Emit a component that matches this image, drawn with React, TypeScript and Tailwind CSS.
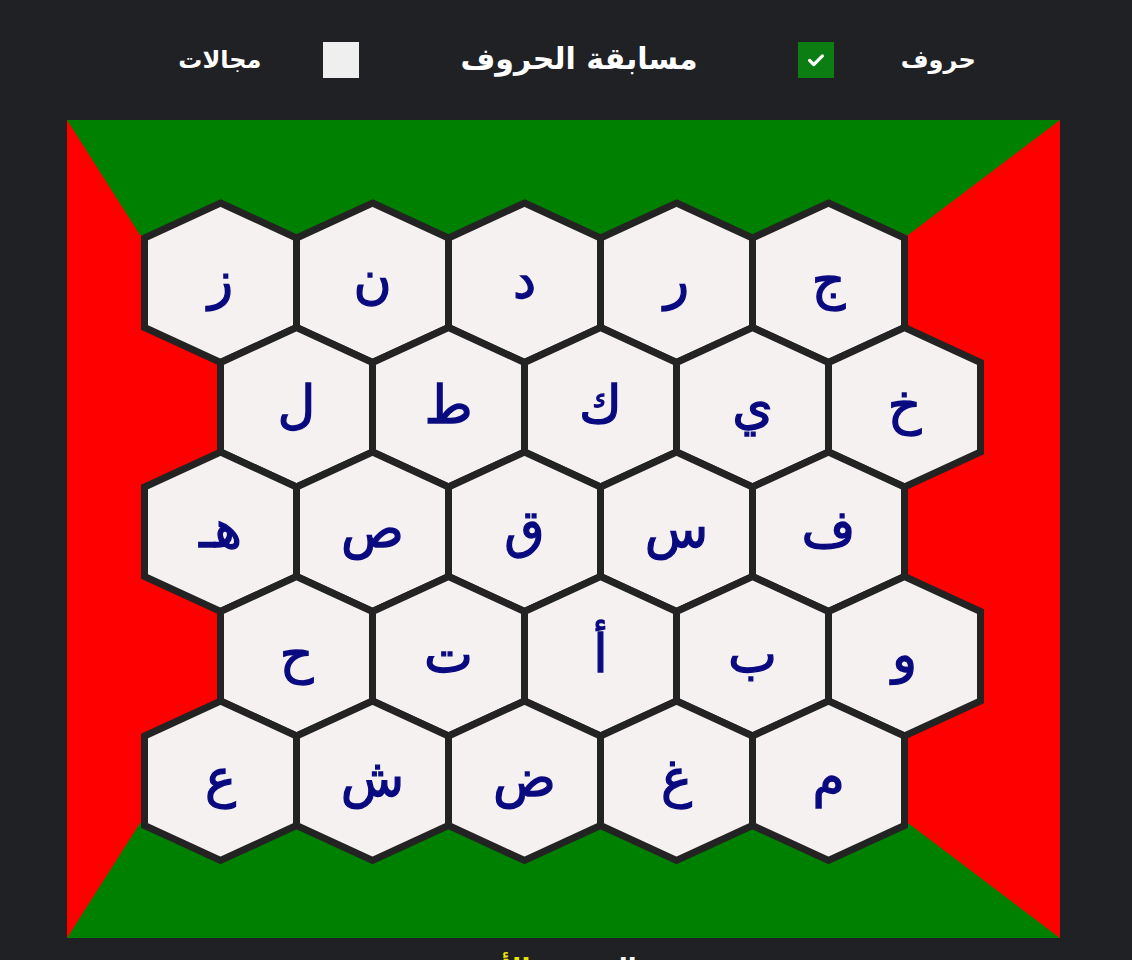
const rows: string[][] = [
  ['ز', 'ن', 'د', 'ر', 'ج'],
  ['ل', 'ط', 'ك', 'ي', 'خ'],
  ['هـ', 'ص', 'ق', 'س', 'ف'],
  ['ح', 'ت', 'أ', 'ب', 'و'],
  ['ع', 'ش', 'ض', 'غ', 'م'],
];

function Check({ on }: { on: boolean }) {
  return (
    <div
      className={
        on
          ? 'w-[36px] h-[36px] bg-[#0b7d12] flex items-center justify-center'
          : 'w-[36px] h-[36px] bg-[#efefef]'
      }
    >
      {on && (
        <svg width="22" height="22" viewBox="0 0 24 24" fill="none" stroke="white" strokeWidth="3.5" strokeLinecap="round" strokeLinejoin="round">
          <path d="M5 12.5l4.5 4.5L19 7.5" />
        </svg>
      )}
    </div>
  );
}

function Board() {
  return (
    <div className="relative w-[993px] h-[818px] ml-[67px]">
      {/* coloured frame: the border joints make the diagonals */}
      <div className="h-full border-l-[73px] border-r-[152px] border-y-[115px] border-l-[#ff0000] border-r-[#ff0000] border-y-[#008000] bg-[#ff0000]" />
      <svg className="absolute inset-0" width="993" height="818" viewBox="0 0 993 818">
        {rows.map((row, r) =>
          row.map((letter, c) => {
            const cx = 153.5 + 152 * c + (r % 2 ? 76 : 0);
            const ty = 83 + 124.5 * r;
            const pts = [
              [cx, ty],
              [cx + 76, ty + 35],
              [cx + 76, ty + 124.5],
              [cx, ty + 159.5],
              [cx - 76, ty + 124.5],
              [cx - 76, ty + 35],
            ]
              .map((p) => p.join(','))
              .join(' ');
            return (
              <g key={r + '-' + c}>
                <polygon points={pts} fill="#f5f1f0" stroke="#232323" strokeWidth="7" strokeLinejoin="miter" />
                <text
                  x={cx}
                  y={ty + 77}
                  textAnchor="middle"
                  dominantBaseline="central"
                  fill="#0a0a80"
                  stroke="#0a0a80"
                  strokeWidth="1.3"
                  fontSize="52"
                  fontFamily="'DejaVu Sans', sans-serif"
                >
                  {letter}
                </text>
              </g>
            );
          })
        )}
      </svg>
    </div>
  );
}

export default function App() {
  return (
    <div className="min-h-screen bg-[#202124] overflow-hidden" style={{ fontFamily: "'DejaVu Sans', sans-serif" }}>
      <div dir="rtl" className="h-[120px] flex items-center justify-center pl-[22px] text-white font-bold">
        <span className="text-[24px]">حروف</span>
        <div className="mr-[67px]">
          <Check on />
        </div>
        <h1 className="mr-[100px] text-[30px] pb-[4px]">مسابقة الحروف</h1>
        <div className="mr-[101px]">
          <Check on={false} />
        </div>
        <span className="mr-[62px] text-[24px]">مجالات</span>
      </div>
      <Board />
      <p dir="rtl" className="mt-[14px] text-center text-[26px] leading-[32px] font-bold text-white">
        دور الفريق: <span className="text-[#e6e600]">الأخضر</span>
      </p>
    </div>
  );
}
